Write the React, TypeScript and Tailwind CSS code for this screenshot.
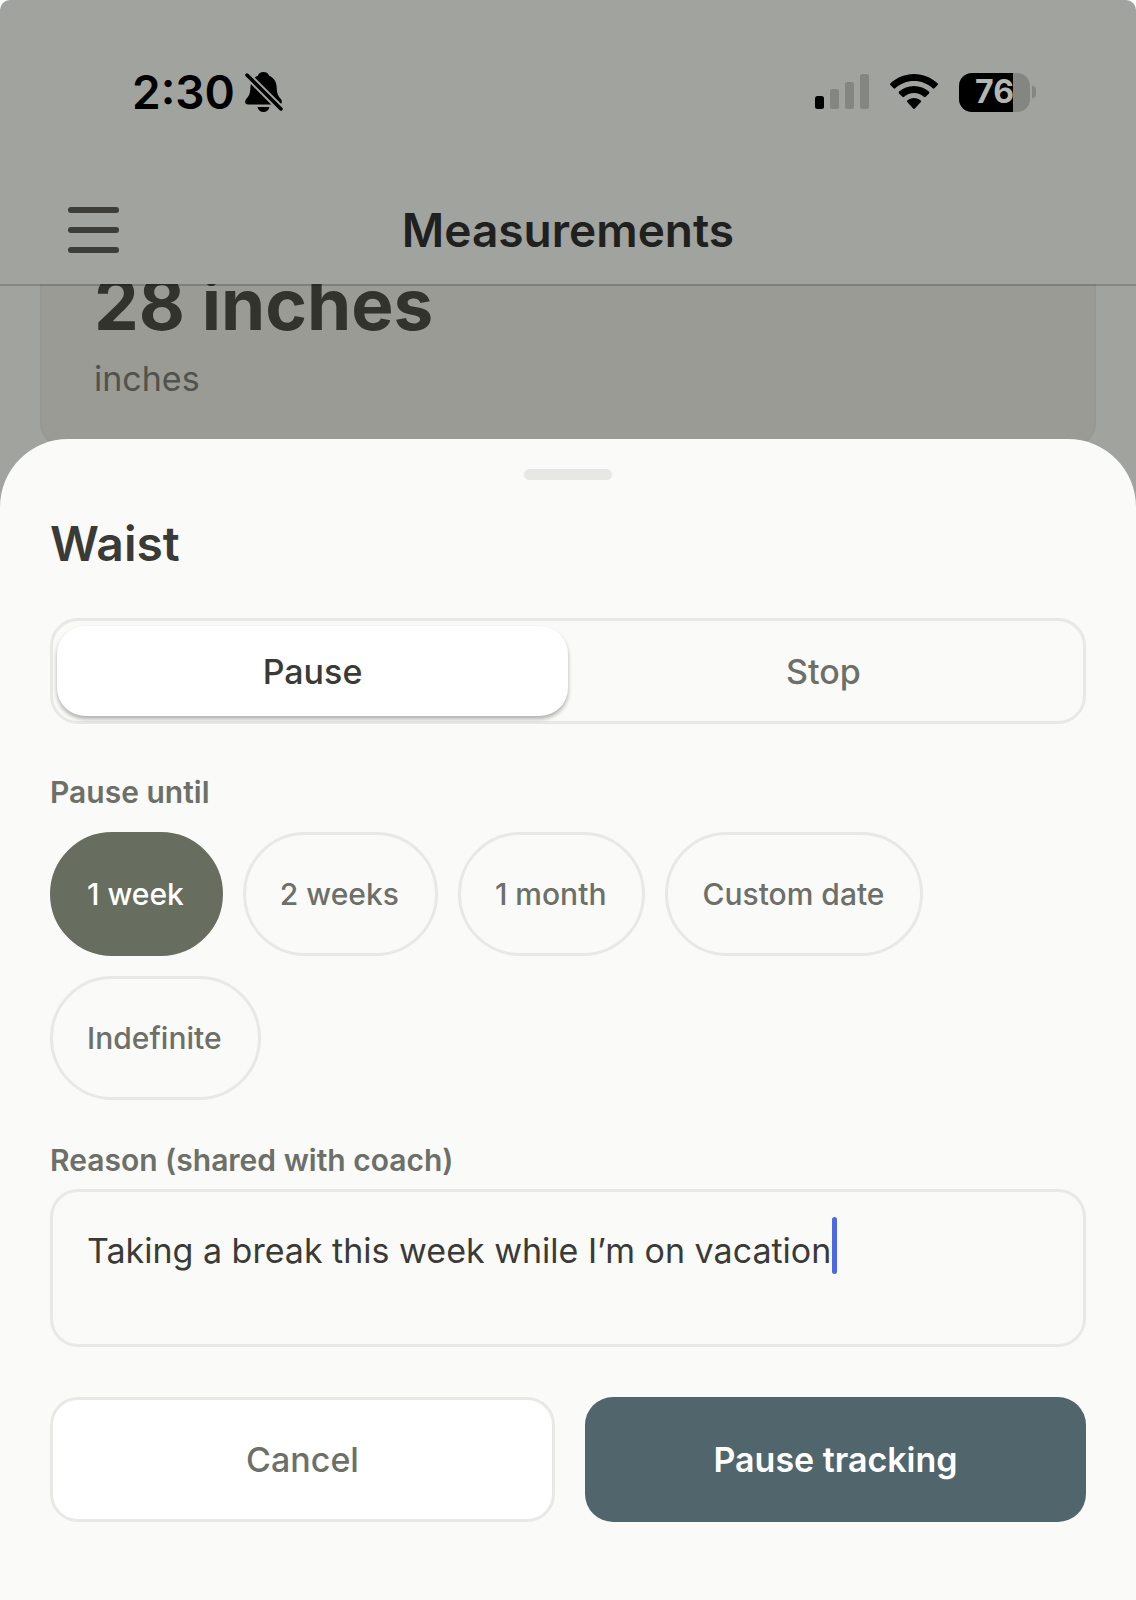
import { useState } from "react";

type Mode = "pause" | "stop";

const durations = ["1 week", "2 weeks", "1 month", "Custom date", "Indefinite"];

const BellOffIcon = () => (
  <svg width="38" height="42" viewBox="0 0 38 42" aria-hidden="true">
    <path
      d="M18.500 1c3 0 5 1.600 5.600 3.800 5 2 7.400 6.200 7.600 11.700.2 6.500 1.500 8.500 4.300 11.800 1.600 2 1 5.200-2 5.200H3c-3 0-3.600-3.200-2-5.200 3-3.400 4.200-5.300 4.400-11.800.2-5.500 2.600-9.700 7.500-11.700C13.500 2.600 15.500 1 18.500 1z"
      fill="#000"
    />
    <path d="M12.500 36h12c-.6 3-3 5-6 5s-5.400-2-6-5z" fill="#000" />
    <path d="M-1 1 37 39" stroke="#a1a39f" strokeWidth="7.500" />
    <path d="M2 4 36 38" stroke="#000" strokeWidth="3.500" strokeLinecap="round" />
  </svg>
);

const SignalIcon = () => (
  <svg width="54" height="36" viewBox="0 0 54 36" aria-hidden="true">
    <rect x="0" y="22" width="9" height="13" rx="2.500" fill="#000" />
    <rect x="15" y="15" width="9" height="20" rx="2.500" fill="#838681" />
    <rect x="30" y="8" width="9" height="27" rx="2.500" fill="#838681" />
    <rect x="45" y="0" width="9" height="35" rx="2.500" fill="#838681" />
  </svg>
);

const WifiIcon = () => (
  <svg width="48" height="36" viewBox="0 0 48 36" aria-hidden="true">
    <path d="M24 0c9 0 17.300 3.500 23.500 9.300.6.600.6 1.200.1 1.800l-3.200 3.200c-.5.500-1.200.5-1.700 0C37.700 9.700 31.200 7.100 24 7.100S10.300 9.700 5.300 14.300c-.5.500-1.200.5-1.700 0L.4 11.100c-.5-.6-.5-1.200.1-1.800C6.700 3.500 15 0 24 0z" />
    <path d="M24 12c5.700 0 10.900 2.100 14.900 5.600.6.600.6 1.200.1 1.800l-3.400 3.400c-.5.500-1.100.5-1.700 0-2.600-2.300-6-3.700-9.900-3.700s-7.300 1.400-9.900 3.700c-.6.500-1.200.5-1.700 0L9 19.400c-.5-.6-.5-1.200.1-1.800C13.100 14.100 18.300 12 24 12z" />
    <path d="M24 24c2.600 0 4.900.9 6.700 2.400.6.500.6 1.200.1 1.700L24.900 34.600c-.5.600-1.300.6-1.800 0L17.200 28.100c-.5-.5-.5-1.200.1-1.700C19.100 24.900 21.400 24 24 24z" />
  </svg>
);

const Battery = ({ level }: { level: number }) => (
  <div className="flex items-center gap-0.5">
    <div className="relative flex h-[39px] w-[71px] items-center justify-center overflow-hidden rounded-[13px] bg-[#838681]">
      <div className="absolute inset-y-0 left-0 bg-black" style={{ width: `${level}%` }} />
      <span className="relative text-[32px] leading-10 font-bold text-[#b4b6b2]">{level}</span>
    </div>
    <div className="h-3 w-1 rounded-r-full bg-[#838681]" />
  </div>
);

const StatusBar = () => (
  <div className="flex items-center justify-between pt-[60px] pr-[100px] pl-[132px]">
    <div className="flex items-center gap-2.5">
      <span className="text-[46px] leading-[64px] font-semibold text-black">2:30</span>
      <BellOffIcon />
    </div>
    <div className="flex items-center gap-[21px]">
      <SignalIcon />
      <WifiIcon />
      <Battery level={76} />
    </div>
  </div>
);

const Header = () => (
  <header className="relative z-10 h-[286px] border-b-2 border-black/17">
    <StatusBar />
    <div className="mt-[74px] grid grid-cols-[51px_1fr_51px] items-center px-[68px]">
      <button type="button" aria-label="Open menu" className="flex cursor-pointer flex-col gap-3.5">
        <span className="h-1.5 w-full rounded-full bg-[#3c3e37]" />
        <span className="h-1.5 w-full rounded-full bg-[#3c3e37]" />
        <span className="h-1.5 w-full rounded-full bg-[#3c3e37]" />
      </button>
      <h1 className="text-center text-[46px] leading-[64px] font-semibold text-[#20211f]">Measurements</h1>
    </div>
  </header>
);

const App = () => {
  const [mode, setMode] = useState<Mode>("pause");
  const [duration, setDuration] = useState("1 week");
  const [reason, setReason] = useState("Taking a break this week while I’m on vacation");

  return (
    <div className="bg-white font-['Inter',sans-serif]">
      <div className="flex min-h-screen flex-col rounded-t-[10px] bg-[#a1a39f]">
        <Header />

        {/* scrolled card, partly under the header and the sheet */}
        <main className="-mt-0.5 -mb-[68px] h-[223px] overflow-hidden px-10">
          <div className="flex h-[163px] flex-col justify-start rounded-b-3xl border-x-2 border-b-2 border-[#979892] bg-[#9a9b94] px-[52px]">
            <p className="-mt-6 text-[71px] leading-[88px] font-bold text-[#32332d]">28 inches</p>
            <p className="mt-1 text-[34px] leading-[54px] text-[#50534d]">inches</p>
          </div>
        </main>

        <section
          role="dialog"
          aria-labelledby="sheet-title"
          className="relative flex-1 rounded-t-[68px] bg-[#fafaf8] px-[50px] pb-[78px]"
        >
          <div className="mx-auto mt-[30px] h-[11px] w-[88px] rounded-full bg-[#e7e8e3]" />
          <h2 id="sheet-title" className="mt-8 text-[48px] leading-[64px] font-semibold text-[#3a3a37]">
            Waist
          </h2>

          <div className="mt-[42px] grid grid-cols-2 rounded-[28px] border-3 border-[#e8e8e5] px-1 py-[5px]">
            <button
              type="button"
              aria-pressed={mode === "pause"}
              onClick={() => setMode("pause")}
              className={`h-[90px] cursor-pointer rounded-[28px] text-[34px] font-medium ${mode === "pause"
                ? "bg-white text-[#3a3a37] shadow-[0_3px_4px_rgba(0,0,0,0.3)]"
                : "text-[#6d6f69]"
                }`}
            >
              Pause
            </button>
            <button
              type="button"
              aria-pressed={mode === "stop"}
              onClick={() => setMode("stop")}
              className={`h-[90px] cursor-pointer rounded-[28px] text-[34px] font-medium ${mode === "stop"
                ? "bg-white text-[#3a3a37] shadow-[0_3px_4px_rgba(0,0,0,0.3)]"
                : "text-[#6d6f69]"
                }`}
            >
              Stop
            </button>
          </div>

          <p id="pause-until" className="mt-12 text-[30px] leading-10 font-semibold text-[#6d6f69]">
            Pause until
          </p>
          <div role="group" aria-labelledby="pause-until" className="mt-5 flex flex-wrap gap-5">
            {durations.map((item) => (
              <button
                key={item}
                type="button"
                aria-pressed={duration === item}
                onClick={() => setDuration(item)}
                className={`h-[124px] cursor-pointer rounded-full border-3 pr-9 pl-[34px] text-[30px] font-medium ${duration === item
                  ? "border-[#676d5f] bg-[#676d5f] text-white"
                  : "border-[#e8e8e5] text-[#6d6f69]"
                  }`}
              >
                {item}
              </button>
            ))}
          </div>

          <label htmlFor="reason" className="mt-10 block text-[30px] leading-10 font-semibold text-[#6d6f69]">
            Reason (shared with coach)
          </label>
          <div className="relative mt-[9px]">
            <textarea
              id="reason"
              value={reason}
              onChange={(e) => setReason(e.target.value)}
              className="block h-[158px] w-full resize-none rounded-[28px] border-3 border-[#e8e8e5] bg-transparent px-[34px] py-8 text-[34px] leading-[54px] text-[#3a3a37] caret-[#4f68e0] focus:outline-none"
            />
            <span className="absolute top-7 left-[782px] h-[57px] w-[5px] rounded-full bg-[#4f68e0]" />
          </div>

          <div className="mt-[50px] grid grid-cols-[505fr_501fr] gap-[30px]">
            <button
              type="button"
              className="h-[125px] cursor-pointer rounded-[28px] border-3 border-[#e8e8e5] bg-white text-[34px] font-medium text-[#6d6f69]"
            >
              Cancel
            </button>
            <button
              type="button"
              className="h-[125px] cursor-pointer rounded-[28px] bg-[#51656d] text-[34px] font-semibold text-white"
            >
              Pause tracking
            </button>
          </div>
        </section>
      </div>
    </div>
  );
};

export default App;
